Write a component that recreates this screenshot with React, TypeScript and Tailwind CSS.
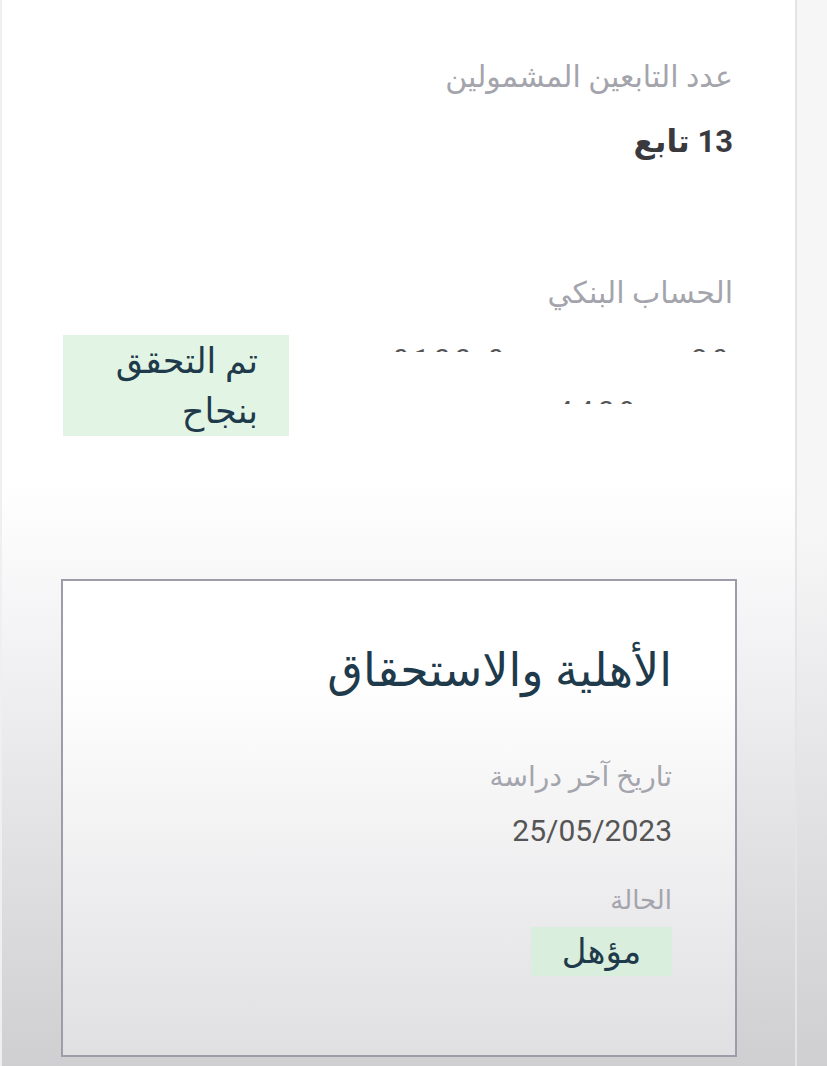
import React from 'react';

const font = { fontFamily: "Roboto, 'DejaVu Sans', sans-serif" };

// The account number in the screenshot is mostly blanked out; only the tops
// of a few digits remain, so we render the digits and clip them.
const Masked: React.FC<{ shown: string; hidden?: string; className?: string }> = ({ shown, hidden = '', className = '' }) => (
    <div className={`h-[6px] overflow-hidden leading-[28px] text-[28px] text-[#555] tracking-[5px] ${className}`} dir="ltr">
        <span>{shown}</span>
        <span className="text-transparent">{hidden}</span>
    </div>
);

export default function App() {
    return (
        <div
            className="w-[827px] h-[1066px] flex bg-gradient-to-b from-white from-45% via-[#f3f3f5] via-60% to-[#cfcfd2] overflow-hidden"
            style={font}
        >
            <div className="w-[2px] bg-[#efeff1]" />
            <div className="flex-1 flex flex-col pl-[59px] pr-[62px]" dir="rtl">
                <div className="pt-[57px] text-[30px] leading-[40px] text-[#a4a4ac]">عدد التابعين المشمولين</div>
                <div className="mt-[25px] text-[31px] leading-[40px] font-bold text-[#3a3a3e]">13 تابع</div>

                <div className="mt-[111px] text-[30px] leading-[40px] text-[#a4a4ac]">الحساب البنكي</div>

                <div className="mt-[22px] flex justify-between items-start">
                    <div className="flex flex-col pt-[11px] w-[340px]">
                        <div className="flex justify-between">
                            <Masked shown="20" />
                            <Masked shown="0133 0" hidden="00" />
                        </div>
                        <div className="mt-[46px] flex justify-start pr-[93px]">
                            <Masked shown="4439" />
                        </div>
                    </div>
                    <div className="ml-[2px] w-[226px] h-[101px] bg-[#e2f5e4] pr-[31px] pt-[2px] text-[35px] leading-[50px] text-[#1f3b4b]">
                        تم التحقق
                        <br />
                        بنجاح
                    </div>
                </div>

                <div className="mt-[143px] mr-[-4px] h-[478px] border-2 border-[#9c9cab] bg-gradient-to-b from-white from-20% to-[#e0e0e3] pr-[63px] pt-[59px] flex flex-col items-start">
                    <div className="text-[46px] leading-[60px] text-[#1e3a4b]">الأهلية والاستحقاق</div>
                    <div className="mt-[57px] text-[28px] leading-[40px] text-[#a4a4ac]">تاريخ آخر دراسة</div>
                    <div className="mt-[14px] text-[30px] leading-[40px] text-[#555]">25/05/2023</div>
                    <div className="mt-[29px] text-[26px] leading-[40px] text-[#a4a4ac]">الحالة</div>
                    <div className="mt-[7px] w-[141px] h-[49px] bg-[#d9eedc] flex items-center justify-center text-[34px] text-[#1f3b4b]">
                        مؤهل
                    </div>
                </div>
            </div>
            <div className="w-[2px] bg-[#e4e4e6]" />
            <div className="w-[30px] bg-gradient-to-b from-[#f6f6f7] from-50% to-[#cfcfd2]" />
        </div>
    );
}
